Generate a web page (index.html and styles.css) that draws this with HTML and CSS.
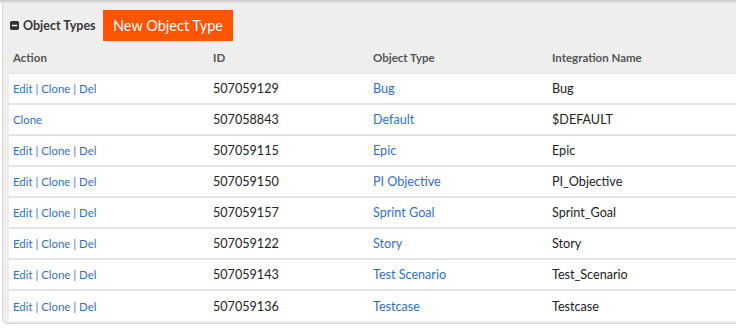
FILE: index.html
```html
<!DOCTYPE html>
<html lang="en">
<head>
<meta charset="utf-8">
<title>Object Types</title>
<link rel="stylesheet" href="styles.css">
</head>
<body>
<div class="topbar"></div>
<div class="panel">
  <div class="head">
    <span class="title">
      <svg class="toggle" viewBox="0 0 10 10"><rect x="0" y="0" width="10" height="10" rx="2" fill="#333"/><rect x="2" y="4.2" width="6" height="1.6" fill="#fff"/></svg>
      Object Types
    </span>
    <button class="btn">New Object Type</button>
  </div>
  <table class="grid">
    <thead>
      <tr><th class="c-act">Action</th><th class="c-id">ID</th><th class="c-type">Object Type</th><th>Integration Name</th></tr>
    </thead>
    <tbody>
      <tr><td class="act"><a>Edit</a> | <a>Clone</a> | <a>Del</a></td><td>507059129</td><td><a>Bug</a></td><td>Bug</td></tr>
      <tr><td class="act"><a>Clone</a></td><td>507058843</td><td><a>Default</a></td><td>$DEFAULT</td></tr>
      <tr><td class="act"><a>Edit</a> | <a>Clone</a> | <a>Del</a></td><td>507059115</td><td><a>Epic</a></td><td>Epic</td></tr>
      <tr><td class="act"><a>Edit</a> | <a>Clone</a> | <a>Del</a></td><td>507059150</td><td><a>PI Objective</a></td><td>PI_Objective</td></tr>
      <tr><td class="act"><a>Edit</a> | <a>Clone</a> | <a>Del</a></td><td>507059157</td><td><a>Sprint Goal</a></td><td>Sprint_Goal</td></tr>
      <tr><td class="act"><a>Edit</a> | <a>Clone</a> | <a>Del</a></td><td>507059122</td><td><a>Story</a></td><td>Story</td></tr>
      <tr><td class="act"><a>Edit</a> | <a>Clone</a> | <a>Del</a></td><td>507059143</td><td><a>Test Scenario</a></td><td>Test_Scenario</td></tr>
      <tr><td class="act"><a>Edit</a> | <a>Clone</a> | <a>Del</a></td><td>507059136</td><td><a>Testcase</a></td><td>Testcase</td></tr>
    </tbody>
  </table>
</div>
</body>
</html>
```
FILE: styles.css
```css
*{box-sizing:border-box;}
html,body{margin:0;background:#fff;}
body{ font-family:Lato,'Open Sans',Arial,sans-serif; color:#222; overflow:hidden; }

.topbar{ height:3px; background:linear-gradient(#c8c8c8,#e6e6e6); }

.panel{ margin:0 -12px 0 2px; background:#eee; border:1px solid #d4d4d4; border-top:0; border-radius:0 0 5px 5px; padding:0 0 2px 6px; }

.head{ display:flex; align-items:center; height:39px; padding-top:6px; }
.title{ display:flex; align-items:center; gap:4px; padding-left:1px; font-size:12.5px; font-weight:700; color:#383838; width:94px; }
.toggle{ width:9px; height:9px; }
.btn{ background:#ff5500; color:#fff; border:none; font-family:inherit; font-size:14.5px; height:31px; padding:0 10px; cursor:pointer; }

.grid{ width:100%; border-collapse:collapse; table-layout:fixed; }
.grid th{ height:31px; text-align:left; font-size:11.5px; font-weight:700; color:#555; padding:1px 4px 0; }
.c-act{ width:200px; }
.c-id{ width:160px; }
.c-type{ width:179px; }
.grid td{ height:31px; background:#fff; border-top:2px solid #e4e4e4; padding:0 4px; font-size:12.6px; color:#222; }
.grid tbody tr:first-child td{ border-top:1px solid #e4e4e4; }
.grid a{ color:#2f6fd1; cursor:pointer; }
.grid td.act{ font-size:11.4px; color:#2f6fd1; }
```
